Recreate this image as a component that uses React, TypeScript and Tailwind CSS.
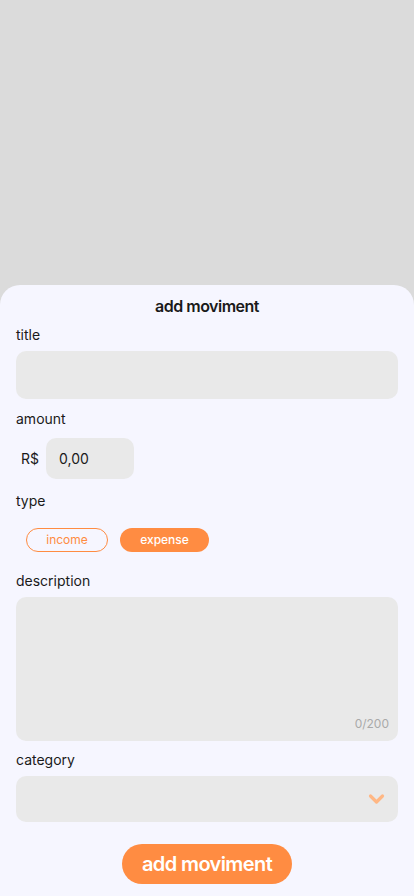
import React, { useState } from 'react';

export default function App() {
  const [type, setType] = useState<'income' | 'expense'>('expense');
  const [description, setDescription] = useState('');

  return (
    <div className="h-[896px] w-[414px] bg-[#dbdbdb] flex flex-col overflow-hidden font-['Inter',sans-serif] text-[#1a1a1a]">
      <div className="h-[285px] shrink-0" />
      <div className="flex-1 bg-[#f6f6ff] rounded-t-[20px] px-4 flex flex-col">
        <h1 className="text-center text-[16px] font-semibold leading-5 mt-[11px] tracking-[-0.5px]">add moviment</h1>

        <label className="text-[14px] leading-5 mt-[9px]">title</label>
        <input
          type="text"
          className="mt-[6px] h-[48px] w-full rounded-[10px] bg-[#e9e9e9] px-3 text-[14px] outline-none"
        />

        <label className="text-[14px] leading-5 mt-[10px]">amount</label>
        <div className="mt-[9px] flex items-center">
          <span className="text-[14px] ml-[5px] w-[25px]">R$</span>
          <input
            type="text"
            defaultValue="0,00"
            className="h-[41px] w-[88px] rounded-[10px] bg-[#e9e9e9] pl-[13px] text-[14px] outline-none"
          />
        </div>

        <label className="text-[14px] leading-5 mt-[12px]">type</label>
        <div className="mt-[17px] flex items-center gap-3 pl-[10px]">
          <button
            onClick={() => setType('income')}
            className={
              type === 'income'
                ? 'h-[24px] w-[82px] rounded-full bg-[#ff8c42] text-white text-[12px] font-medium'
                : 'h-[24px] w-[82px] rounded-full border border-[#ff8c42] text-[#ff8c42] text-[12px]'
            }
          >
            income
          </button>
          <button
            onClick={() => setType('expense')}
            className={
              type === 'expense'
                ? 'h-[24px] w-[89px] rounded-full bg-[#ff8c42] text-white text-[12px] font-medium'
                : 'h-[24px] w-[89px] rounded-full border border-[#ff8c42] text-[#ff8c42] text-[12px]'
            }
          >
            expense
          </button>
        </div>

        <label className="text-[14px] leading-5 mt-[19px]">description</label>
        <div className="relative mt-[6px] h-[144px] w-full rounded-[10px] bg-[#e9e9e9]">
          <textarea
            value={description}
            maxLength={200}
            onChange={(e) => setDescription(e.target.value)}
            className="h-full w-full resize-none bg-transparent p-3 text-[14px] outline-none"
          />
          <span className="absolute right-[9px] bottom-[8px] text-[12px] text-[#a9a9a9]">
            {description.length}/200
          </span>
        </div>

        <label className="text-[14px] leading-5 mt-[9px]">category</label>
        <div className="relative mt-[6px] h-[46px] w-full rounded-[10px] bg-[#e9e9e9]">
          <select className="h-full w-full appearance-none bg-transparent px-3 text-[14px] outline-none">
            <option value=""></option>
          </select>
          <svg
            className="pointer-events-none absolute right-[13px] top-[17px]"
            width="17"
            height="12"
            viewBox="0 0 17 12"
            fill="none"
          >
            <path d="M2.5 3 L8.5 9 L14.5 3" stroke="#ffb784" strokeWidth="3.2" strokeLinecap="round" strokeLinejoin="round" />
          </svg>
        </div>

        <div className="mt-[22px] flex justify-center">
          <button className="h-[40px] w-[170px] rounded-full bg-[#ff8c42] text-white text-[20px] font-semibold tracking-[-0.6px]">
            add moviment
          </button>
        </div>
      </div>
    </div>
  );
}
